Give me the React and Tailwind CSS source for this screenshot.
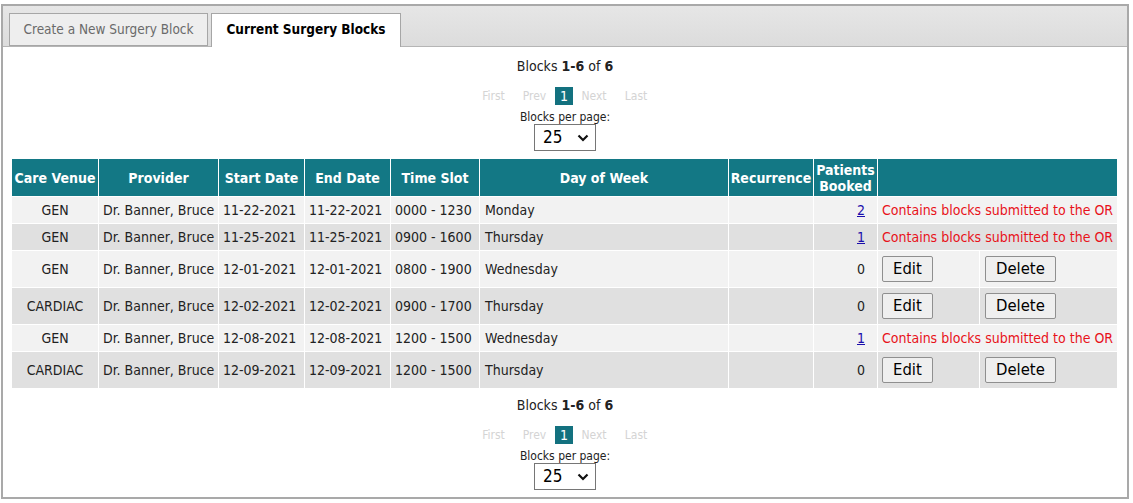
import React from "react";

const rows = [
  { venue: "GEN", start: "11-22-2021", end: "11-22-2021", slot: "0000 - 1230", day: "Monday", booked: "2", submitted: true },
  { venue: "GEN", start: "11-25-2021", end: "11-25-2021", slot: "0900 - 1600", day: "Thursday", booked: "1", submitted: true },
  { venue: "GEN", start: "12-01-2021", end: "12-01-2021", slot: "0800 - 1900", day: "Wednesday", booked: "0", submitted: false },
  { venue: "CARDIAC", start: "12-02-2021", end: "12-02-2021", slot: "0900 - 1700", day: "Thursday", booked: "0", submitted: false },
  { venue: "GEN", start: "12-08-2021", end: "12-08-2021", slot: "1200 - 1500", day: "Wednesday", booked: "1", submitted: true },
  { venue: "CARDIAC", start: "12-09-2021", end: "12-09-2021", slot: "1200 - 1500", day: "Thursday", booked: "0", submitted: false },
];

const Pager = () => (
  <div className="flex flex-col items-center text-[14px] text-[#222]">
    <p className="h-[18px] leading-[18px]">
      Blocks <b>1-6</b> of <b>6</b>
    </p>
    <div className="mt-[11px] flex h-[19px] items-center pt-[1px] text-[12px] text-[#d4d4d4]">
      <span className="w-[41px] text-center">First</span>
      <span className="w-[41px] text-center">Prev</span>
      <span className="h-[18px] w-[18px] bg-[#13717f] text-center text-[14px] leading-[18px] text-white">1</span>
      <span className="w-[42px] text-center">Next</span>
      <span className="w-[42px] text-center">Last</span>
    </div>
    <p className="mt-[5px] text-[12px] leading-[14px]">Blocks per page:</p>
    <div className="flex h-[27px] w-[62px] items-center justify-between border border-[#767676] bg-white pl-[8px] pr-[6px] text-[17px] text-black">
      <span>25</span>
      <svg width="12" height="8" viewBox="0 0 12 8">
        <path d="M1.5 1.5 L6 6 L10.5 1.5" fill="none" stroke="#111" strokeWidth="2.2" />
      </svg>
    </div>
  </div>
);

const Btn = ({ children }) => (
  <button className="h-[26px] rounded-[2px] border border-[#8f8f8f] bg-[#efefef] px-[10px] text-[16.5px] leading-[24px] text-black">
    {children}
  </button>
);

export default function App() {
  return (
    <div
      className="h-[503px] w-[1133px] bg-white pt-[4px] pl-[1px]"
      style={{ fontFamily: "Tahoma, 'DejaVu Sans Condensed', 'DejaVu Sans', sans-serif" }}
    >
      <div className="h-[495px] w-[1128px] border-2 border-[#a9a9a9]">
        {/* tab bar */}
        <div className="flex h-[41px] items-end gap-[3px] border-b border-[#b5b5b5] bg-[linear-gradient(#e6e6e6,#dcdcdc)] pl-[6px]">
          <div className="flex h-[33px] w-[199px] items-center justify-center border border-[#a6a6a6] bg-[#eeeeee] pb-[1px] text-[13.5px] text-[#6a6a6a]">
            Create a New Surgery Block
          </div>
          <div className="-mb-px flex h-[34px] w-[190px] items-center justify-center border border-b-0 border-[#a6a6a6] bg-white pb-[2px] text-[13.5px] font-bold text-black">
            Current Surgery Blocks
          </div>
        </div>

        <div className="px-[8px] pt-[10px]">
          <Pager />

          <table className="mt-[7px] w-[1106px] table-fixed border-collapse text-[14px] text-[#222]">
            <colgroup>
              <col className="w-[87px]" />
              <col className="w-[120px]" />
              <col className="w-[86px]" />
              <col className="w-[86px]" />
              <col className="w-[89px]" />
              <col className="w-[249px]" />
              <col className="w-[85px]" />
              <col className="w-[64px]" />
              <col className="w-[102px]" />
              <col className="w-[138px]" />
            </colgroup>
            <thead>
              <tr className="h-[38px] bg-[#137885] text-white">
                {["Care Venue", "Provider", "Start Date", "End Date", "Time Slot", "Day of Week", "Recurrence"].map((h) => (
                  <th key={h} className="border border-white px-0 text-center font-bold leading-[16px] whitespace-nowrap">
                    {h}
                  </th>
                ))}
                <th className="border border-white text-center font-bold leading-[16px]">
                  Patients
                  <br />
                  Booked
                </th>
                <th colSpan={2} className="border border-white" />
              </tr>
            </thead>
            <tbody>
              {rows.map((r, i) => (
                <tr
                  key={i}
                  className={`${r.submitted ? "h-[27px]" : "h-[37px]"} ${i % 2 === 0 ? "bg-[#f2f2f2]" : "bg-[#e0e0e0]"}`}
                >
                  <td className="border border-white text-center">{r.venue}</td>
                  <td className="border border-white px-[4px] whitespace-nowrap">Dr. Banner, Bruce</td>
                  <td className="border border-white px-[4px] whitespace-nowrap">{r.start}</td>
                  <td className="border border-white px-[4px] whitespace-nowrap">{r.end}</td>
                  <td className="border border-white px-[4px] whitespace-nowrap">{r.slot}</td>
                  <td className="border border-white px-[5px]">{r.day}</td>
                  <td className="border border-white" />
                  <td className="border border-white px-[12px] text-right">
                    {r.submitted ? <a className="text-[#1a0dab] underline">{r.booked}</a> : r.booked}
                  </td>
                  {r.submitted ? (
                    <td colSpan={2} className="border border-white px-[4px] whitespace-nowrap text-[#e8121a]">
                      Contains blocks submitted to the OR
                    </td>
                  ) : (
                    <>
                      <td className="border border-white px-[4px]">
                        <Btn>Edit</Btn>
                      </td>
                      <td className="border border-white px-[5px]">
                        <Btn>Delete</Btn>
                      </td>
                    </>
                  )}
                </tr>
              ))}
            </tbody>
          </table>

          <div className="mt-[7px]">
            <Pager />
          </div>
        </div>
      </div>
    </div>
  );
}
